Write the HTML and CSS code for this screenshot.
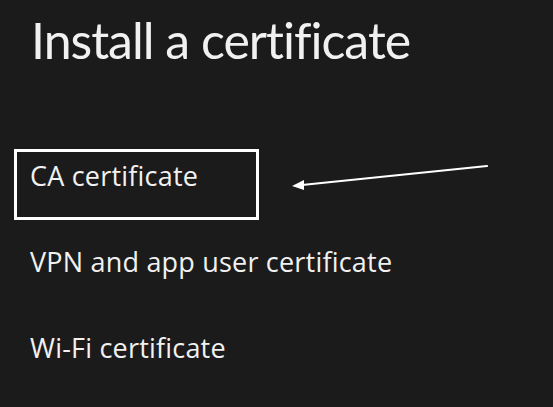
FILE: index.html
```html
<!DOCTYPE html>
<html lang="en">
<head>
  <meta charset="UTF-8" />
  <meta name="viewport" content="width=device-width, initial-scale=1.0"/>
  <title>Install a certificate</title>
  <link rel="stylesheet" href="styles.css">
</head>
<body>
  <h1>Install a certificate</h1>

  <ul class="options">
    <li class="option">CA certificate</li>
    <li class="option">VPN and app user certificate</li>
    <li class="option">Wi-Fi certificate</li>
  </ul>

  <!-- annotation drawn on top of the screen -->
  <div class="highlight"></div>
  <svg class="arrow" width="553" height="407" viewBox="0 0 553 407">
    <line x1="487" y1="166" x2="302" y2="185" stroke="#fff" stroke-width="2.2" stroke-linecap="round" />
    <polygon points="292,186 304,180 304,190" fill="#fff" />
  </svg>
</body>
</html>
```

FILE: styles.css
```css
body {
  margin: 0;
  background: #1b1b1b;
  color: #f1f1f1;
  font-family: 'Open Sans', Roboto, sans-serif;
  width: 553px;
  height: 407px;
  overflow: hidden;
  position: relative;
}
h1 {
  margin: 10px 0 0;
  padding-left: 31px;
  font-family: Lato, Roboto, sans-serif;
  font-size: 50px;
  font-weight: 400;
  letter-spacing: -1px;
  line-height: 60px;
}
.options {
  list-style: none;
  margin: 63px 0 0;
  padding: 0 0 0 30px;
}
.option {
  font-size: 27px;
  letter-spacing: 0.2px;
  line-height: 86px;
}
.highlight {
  position: absolute;
  left: 14px;
  top: 149px;
  width: 239px;
  height: 65px;
  border: 3px solid #fff;
}
.arrow {
  position: absolute;
  left: 0;
  top: 0;
}
```
